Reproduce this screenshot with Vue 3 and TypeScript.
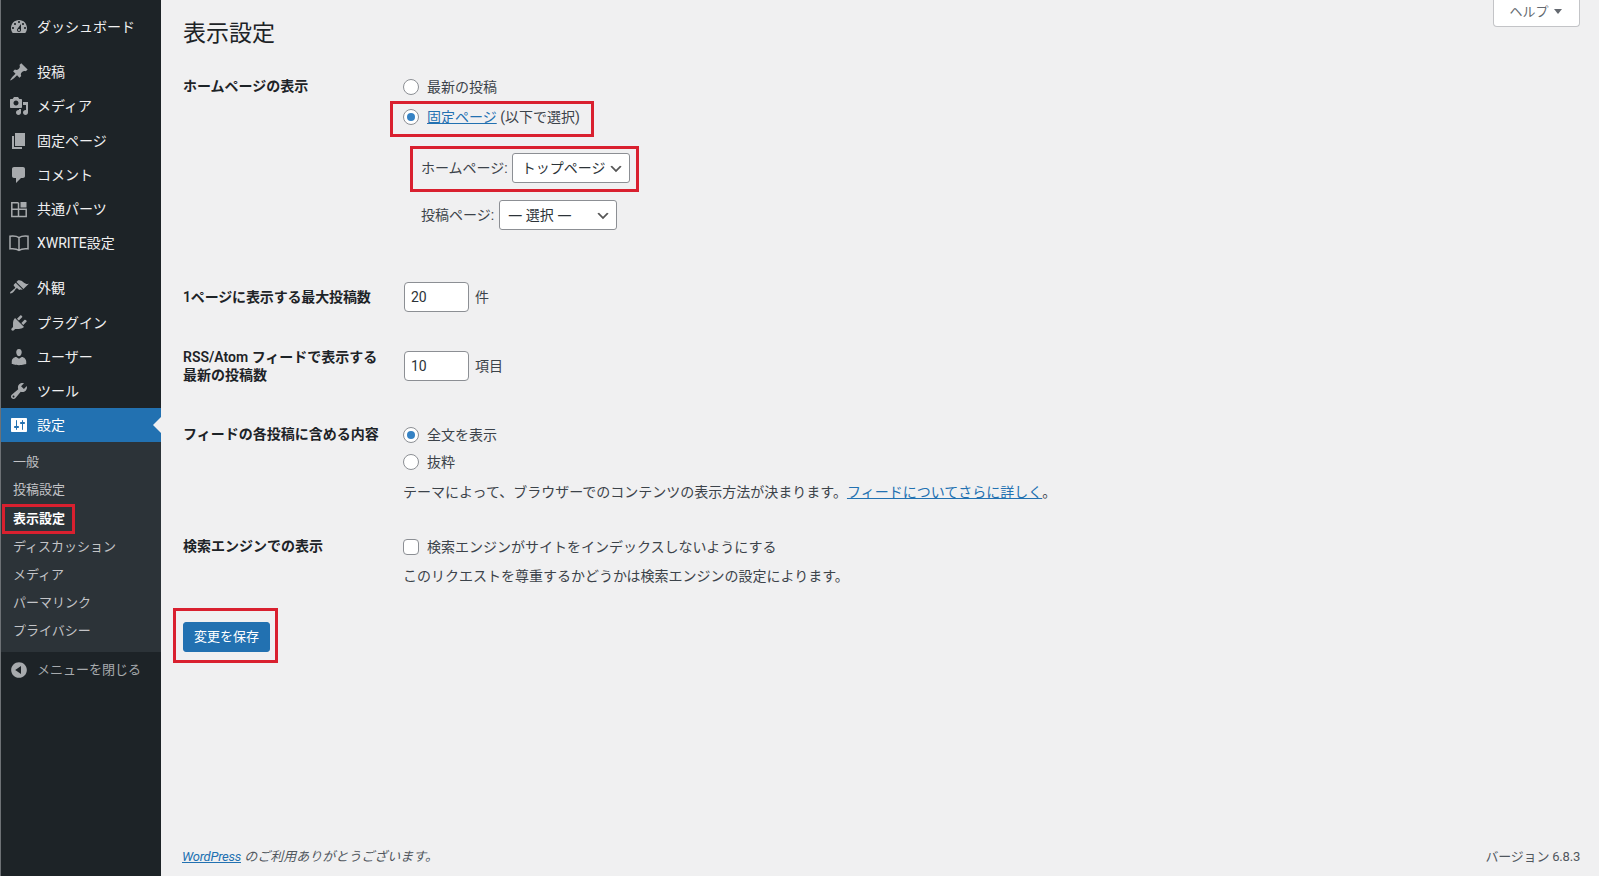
<script setup lang="ts">
interface MenuItem {
  label: string
  icon: string
  gap?: boolean
  outline?: boolean
  current?: boolean
}

const menu: MenuItem[] = [
  { label: 'ダッシュボード', icon: 'M3.76 16h12.48c1.1-1.37 1.76-3.11 1.76-5 0-4.42-3.58-8-8-8s-8 3.58-8 8c0 1.89.66 3.63 1.76 5zM10 4c.55 0 1 .45 1 1s-.45 1-1 1-1-.45-1-1 .45-1 1-1zM6 6c.55 0 1 .45 1 1s-.45 1-1 1-1-.45-1-1 .45-1 1-1zm8 0c.55 0 1 .45 1 1s-.45 1-1 1-1-.45-1-1 .45-1 1-1zm-5.37 5.55L12 7v6c0 1.1-.9 2-2 2s-2-.9-2-2c0-.57.24-1.08.63-1.45zM4 10c.55 0 1 .45 1 1s-.45 1-1 1-1-.45-1-1 .45-1 1-1zm12 0c.55 0 1 .45 1 1s-.45 1-1 1-1-.45-1-1 .45-1 1-1zm-5 3c0-.55-.45-1-1-1s-1 .45-1 1 .45 1 1 1 1-.45 1-1z' },
  { label: '投稿', gap: true, icon: 'M10.44 3.02l1.82-1.82 6.36 6.35-1.83 1.82c-1.05-.68-2.48-.57-3.41.36l-.75.75c-.92.93-1.04 2.35-.35 3.41l-1.83 1.82-2.41-2.41-2.8 2.79c-.42.42-3.38 2.71-3.8 2.29s1.86-3.39 2.28-3.81l2.79-2.79L4.1 9.36l1.83-1.82c1.05.69 2.48.57 3.4-.36l.75-.75c.93-.92 1.05-2.35.36-3.41z' },
  { label: 'メディア', icon: 'M13 11V4c0-.55-.45-1-1-1h-1.67L9 1H5L3.67 3H2c-.55 0-1 .45-1 1v7c0 .55.45 1 1 1h10c.55 0 1-.45 1-1zM7 4.5c1.38 0 2.5 1.12 2.5 2.5S8.38 9.5 7 9.5 4.5 8.38 4.5 7 5.62 4.5 7 4.5zM14 6h5v10.5c0 1.38-1.12 2.5-2.5 2.5S14 17.88 14 16.5s1.12-2.5 2.5-2.5c.17 0 .34.02.5.05V9h-3V6zm-4 8.05V13h2v3.5c0 1.38-1.12 2.5-2.5 2.5S7 17.88 7 16.5 8.12 14 9.5 14c.17 0 .34.02.5.05z' },
  { label: '固定ページ', icon: 'M6 15V2h10v13H6zm-1 1h8v2H3V5h2v11z' },
  { label: 'コメント', icon: 'M5 2h9c1.1 0 2 .9 2 2v7c0 1.1-.9 2-2 2h-2l-5 5v-5H5c-1.1 0-2-.9-2-2V4c0-1.1.9-2 2-2z' },
  { label: '共通パーツ', outline: true, icon: 'M9.5 3.8H2.8v13.7h14.4v-7.3H2.8M9.5 3.8v13.7' },
  { label: 'XWRITE設定', outline: true, icon: 'M10 4.6C8 3.2 5 2.8 1 3.2v12.6c4-.4 7 0 9 1.6 2-1.6 5-2 9-1.6V3.2c-4-.4-7 0-9 1.4zM10 4.6v12.8' },
  { label: '外観', gap: true, icon: 'M14.48 11.06L7.41 3.99l1.5-1.5c.5-.56 2.3-.47 3.51.32 1.21.8 1.43 1.28 2.91 2.1 1.18.64 2.45 1.26 4.45.85zm-.71.71L6.7 4.7 4.93 6.47c-.39.39-.39 1.02 0 1.41l1.06 1.06c.39.39.39 1.03 0 1.42-.6.6-1.43 1.11-2.21 1.69-.35.26-.7.53-1.01.84C1.43 13.23.66 14.8 1.2 15.34c.53.53 2.1-.23 3.43-1.56.31-.31.58-.66.84-1.01.58-.78 1.09-1.61 1.69-2.21.39-.39 1.03-.39 1.42 0l1.06 1.06c.39.39 1.02.39 1.41 0z' },
  { label: 'プラグイン', icon: 'M13.11 4.36L9.87 7.6 8 5.73l3.24-3.24c.35-.34 1.05-.2 1.56.32.52.51.66 1.21.31 1.55zm-8 1.77l.91-1.12 9.01 9.01-1.19.84c-.71.71-2.63 1.16-3.82 1.16H6.14L4.9 17.26c-.59.59-1.54.59-2.12 0-.59-.58-.59-1.53 0-2.12l1.24-1.24v-3.88c0-1.13.4-3.19 1.09-3.89zm7.26 3.97l3.24-3.24c.34-.35 1.04-.21 1.55.31.52.51.66 1.21.31 1.55l-3.24 3.25z' },
  { label: 'ユーザー', icon: 'M10 9.25c-2.27 0-2.73-3.44-2.73-3.44C7 4.02 7.82 2 9.97 2c2.16 0 2.98 2.02 2.71 3.81 0 0-.41 3.44-2.68 3.44zm0 2.57L12.72 10c2.39 0 4.52 2.33 4.52 4.53v2.49s-3.65 1.13-7.24 1.13c-3.65 0-7.24-1.13-7.24-1.13v-2.49c0-2.25 1.94-4.48 4.47-4.48z' },
  { label: 'ツール', icon: 'M16.68 9.77c-1.34 1.34-3.3 1.67-4.95.99l-5.41 6.52c-.99.99-2.59.99-3.58 0s-.99-2.59 0-3.57l6.52-5.42c-.68-1.65-.35-3.61.99-4.95 1.28-1.28 3.12-1.62 4.72-1.06l-2.89 2.89 2.82 2.82 2.86-2.87c.53 1.58.18 3.39-1.08 4.65zM3.81 16.21c.4.39 1.04.39 1.43 0 .4-.4.4-1.04 0-1.43-.39-.4-1.03-.4-1.43 0-.39.39-.39 1.03 0 1.43z' },
  { label: '設定', current: true, icon: 'M18 16V4c0-.55-.45-1-1-1H3c-.55 0-1 .45-1 1v12c0 .55.45 1 1 1h14c.55 0 1-.45 1-1zM8 11h1c.55 0 1 .45 1 1s-.45 1-1 1H8v1.5c0 .28-.22.5-.5.5s-.5-.22-.5-.5V13H6c-.55 0-1-.45-1-1s.45-1 1-1h1V5.5c0-.28.22-.5.5-.5s.5.22.5.5V11zm5-2h-1c-.55 0-1-.45-1-1s.45-1 1-1h1V5.5c0-.28.22-.5.5-.5s.5.22.5.5V7h1c.55 0 1 .45 1 1s-.45 1-1 1h-1v5.5c0 .28-.22.5-.5.5s-.5-.22-.5-.5V9z' },
]

const submenu = ['一般', '投稿設定', '表示設定', 'ディスカッション', 'メディア', 'パーマリンク', 'プライバシー']
</script>

<template>
  <div class="shell">
    <aside class="side">
      <nav class="menu">
        <template v-for="item in menu" :key="item.label">
          <a class="item" :class="{ gap: item.gap, current: item.current }">
            <svg class="icon" viewBox="0 0 20 20" :class="{ outline: item.outline }">
              <path :d="item.icon" />
              <rect v-if="item.label === '共通パーツ'" class="solid" x="11.5" y="3" width="6" height="5.5" />
            </svg>
            <span>{{ item.label }}</span>
          </a>
          <ul v-if="item.current" class="sub">
            <li v-for="s in submenu" :key="s" :class="{ active: s === '表示設定' }">
              <span class="mark" :class="{ hl: s === '表示設定' }">{{ s }}</span>
            </li>
          </ul>
        </template>
        <a class="item collapse">
          <svg class="icon" viewBox="0 0 20 20"><path d="M10 2.16c4.33 0 7.84 3.51 7.84 7.84s-3.51 7.84-7.84 7.84S2.16 14.33 2.16 10 5.71 2.16 10 2.16zm2 11.72V6.12L6.18 9.97z" /></svg>
          <span>メニューを閉じる</span>
        </a>
      </nav>
    </aside>

    <main class="main">
      <div class="help-row"><button class="help" type="button">ヘルプ<i class="tri"></i></button></div>
      <h1>表示設定</h1>

      <section class="row first">
        <div class="th">ホームページの表示</div>
        <div class="td">
          <label class="opt"><span class="radio"></span>最新の投稿</label>
          <label class="opt second"><span class="hl hl-page"><span class="radio on"></span><a class="link">固定ページ</a>&nbsp;(以下で選択)</span></label>
          <div class="selects">
            <label class="sel-row"><span class="hl hl-home"><span class="sel-label">ホームページ:</span><select class="select home"><option>トップページ</option></select></span></label>
            <label class="sel-row"><span class="sel-label post">投稿ページ:</span><select class="select"><option>— 選択 —</option></select></label>
          </div>
        </div>
      </section>

      <section class="row num">
        <div class="th tight">1ページに表示する最大投稿数</div>
        <div class="td inline"><input class="number" value="20" /><span>件</span></div>
      </section>

      <section class="row num rss">
        <div class="th">RSS/Atom フィードで表示する<br />最新の投稿数</div>
        <div class="td inline"><input class="number" value="10" /><span>項目</span></div>
      </section>

      <section class="row feed">
        <div class="th">フィードの各投稿に含める内容</div>
        <div class="td">
          <label class="opt"><span class="radio on"></span>全文を表示</label>
          <label class="opt next"><span class="radio"></span>抜粋</label>
          <p class="desc">テーマによって、ブラウザーでのコンテンツの表示方法が決まります。<a class="link">フィードについてさらに詳しく</a>。</p>
        </div>
      </section>

      <section class="row search">
        <div class="th">検索エンジンでの表示</div>
        <div class="td">
          <label class="opt"><span class="check"></span>検索エンジンがサイトをインデックスしないようにする</label>
          <p class="desc">このリクエストを尊重するかどうかは検索エンジンの設定によります。</p>
        </div>
      </section>

      <div class="submit"><span class="hl hl-save"><button class="save" type="button">変更を保存</button></span></div>

      <footer class="foot">
        <em class="thanks"><a class="link wp">WordPress</a> のご利用ありがとうございます。</em>
        <span class="version">バージョン 6.8.3</span>
      </footer>
    </main>
  </div>
</template>

<style>
html, body { margin: 0; padding: 0; background: #f0f0f1; }
</style>

<style scoped>
* { box-sizing: border-box; }
.shell {
  display: flex;
  height: 876px;
  overflow: hidden;
  background: #f0f0f1;
  color: #3c434a;
  font-family: Roboto, "Noto Sans CJK JP", sans-serif;
  font-size: 14px;
  line-height: 20px;
}
.side {
  flex: 0 0 161px;
  background: #1d2327;
  border-left: 1px solid #6d7175;
  padding-top: 10px;
}
.menu { display: flex; flex-direction: column; }
.item {
  display: flex;
  align-items: center;
  gap: 8px;
  height: 34.2px;
  padding-left: 8px;
  color: #f0f0f1;
  position: relative;
}
.item.gap { margin-top: 11px; }
.icon { width: 20px; height: 20px; flex: none; fill: #a7aaad; }
.icon.outline { fill: none; stroke: #a7aaad; stroke-width: 1.5; }
.icon .solid { fill: #a7aaad; stroke: none; }
.item.current { background: #2271b1; color: #fff; }
.item.current .icon { fill: #fff; }
.item.current::after {
  content: "";
  position: absolute;
  right: 0;
  top: 9px;
  border: 8px solid transparent;
  border-right-color: #f0f0f1;
  border-left-width: 0;
}
.sub {
  list-style: none;
  margin: 0;
  padding: 6px 0 6px;
  background: #2c3338;
  font-size: 13px;
  color: #c3c4c7;
}
.sub li { height: 28.2px; padding-left: 12px; line-height: 28px; }
.sub li.active { color: #fff; font-weight: 600; }
.mark { display: inline-block; }
.collapse { color: #a7aaad; margin-top: 1px; font-size: 13px; }
.hl { position: relative; display: inline-flex; align-items: center; }
.hl::after {
  content: "";
  position: absolute;
  border: 3px solid #d9202f;
  pointer-events: none;
}
.mark.hl { height: 28px; line-height: 28px; }
.mark.hl::after { left: -11px; right: -10px; top: -1px; bottom: -1px; }

.main { flex: 1; min-width: 0; padding: 0 19px 0 22px; display: flex; flex-direction: column; }
.help-row { display: flex; justify-content: flex-end; height: 0; }
.help {
  display: flex;
  align-items: center;
  justify-content: center;
  gap: 5px;
  flex: none;
  width: 87px;
  height: 27px;
  padding: 0 2px 3px 0;
  background: #fff;
  border: 1px solid #c3c4c7;
  border-top: 0;
  border-radius: 0 0 4px 4px;
  color: #646970;
  font: inherit;
  font-size: 13px;
  line-height: 20px;
}
.tri {
  width: 0;
  height: 0;
  border: 4px solid transparent;
  border-top: 5px solid #646970;
  border-bottom: 0;
}
h1 { margin: 0; padding-top: 19px; font-size: 23px; line-height: 29px; font-weight: 400; color: #1d2327; }
.row { display: grid; grid-template-columns: 220px 1fr; }
.th { font-weight: 600; color: #1d2327; line-height: 18.5px; }
.tight { letter-spacing: -0.15px; }
.first { margin-top: 29px; }
.opt { display: flex; align-items: center; height: 20px; }
.second { margin-top: 10px; }
.radio, .check {
  flex: none;
  width: 16px;
  height: 16px;
  margin-right: 8px;
  background: #fff;
  border: 1px solid #8c8f94;
  border-radius: 50%;
  position: relative;
}
.radio.on::before {
  content: "";
  position: absolute;
  inset: 3px;
  border-radius: 50%;
  background: #3582c4;
}
.check { border-radius: 4px; }
.link { color: #2271b1; text-decoration: underline; }
.hl-page::after { left: -13px; right: -14px; top: -6px; bottom: -10px; }
.selects { margin: 26px 0 0 18px; display: flex; flex-direction: column; gap: 17px; }
.sel-row { display: flex; align-items: center; }
.sel-label { margin-right: 4px; }
.sel-label.post { margin-right: 5px; }
.hl-home::after { left: -11px; right: -9px; top: -7px; bottom: -9px; }
.select {
  appearance: none;
  width: 118px;
  height: 30px;
  padding: 0 24px 0 8px;
  border: 1px solid #8c8f94;
  border-radius: 3px;
  font: inherit;
  font-family: "Open Sans", "Noto Sans CJK JP", sans-serif;
  color: #2c3338;
  background: #fff url("data:image/svg+xml,%3Csvg xmlns='http://www.w3.org/2000/svg' viewBox='0 0 20 20'%3E%3Cpath d='M5 6l5 5 5-5 2 1-7 7-7-7 2-1z' fill='%23555'/%3E%3C/svg%3E") no-repeat right 5px top 55%;
  background-size: 16px 16px;
}
.select.home { padding-left: 9px; }
.num { margin-top: 52px; }
.rss { margin-top: 39px; }
.inline { display: flex; align-items: center; height: 30px; padding-left: 1px; }
.number {
  width: 65px;
  height: 30px;
  padding: 0 6px;
  margin-right: 6px;
  border: 1px solid #8c8f94;
  border-radius: 4px;
  background: #fff;
  color: #2c3338;
  font: inherit;
}
.num .th { padding-top: 6px; }
.rss .th { padding-top: 0; margin-top: -3.5px; }
.feed { margin-top: 40px; }
.next { margin-top: 7px; }
.desc { margin: 10px 0 0; line-height: 20px; }
.search { margin-top: 35px; }
.search .desc { margin-top: 9px; }
.submit { margin-top: 36px; }
.save {
  display: block;
  width: 87px;
  height: 30px;
  padding: 0;
  background: #2271b1;
  border: 1px solid #2271b1;
  border-radius: 3px;
  color: #fff;
  font: inherit;
  font-size: 13px;
}
.hl-save::after { left: -10px; right: -8px; top: -14px; bottom: -11px; }
.foot {
  margin-top: auto;
  padding-bottom: 9px;
  display: flex;
  justify-content: space-between;
  font-size: 13px;
  color: #50575e;
}
.thanks { margin-left: -1px; }
.wp { letter-spacing: -0.25px; }
.version { letter-spacing: -0.2px; }
</style>
